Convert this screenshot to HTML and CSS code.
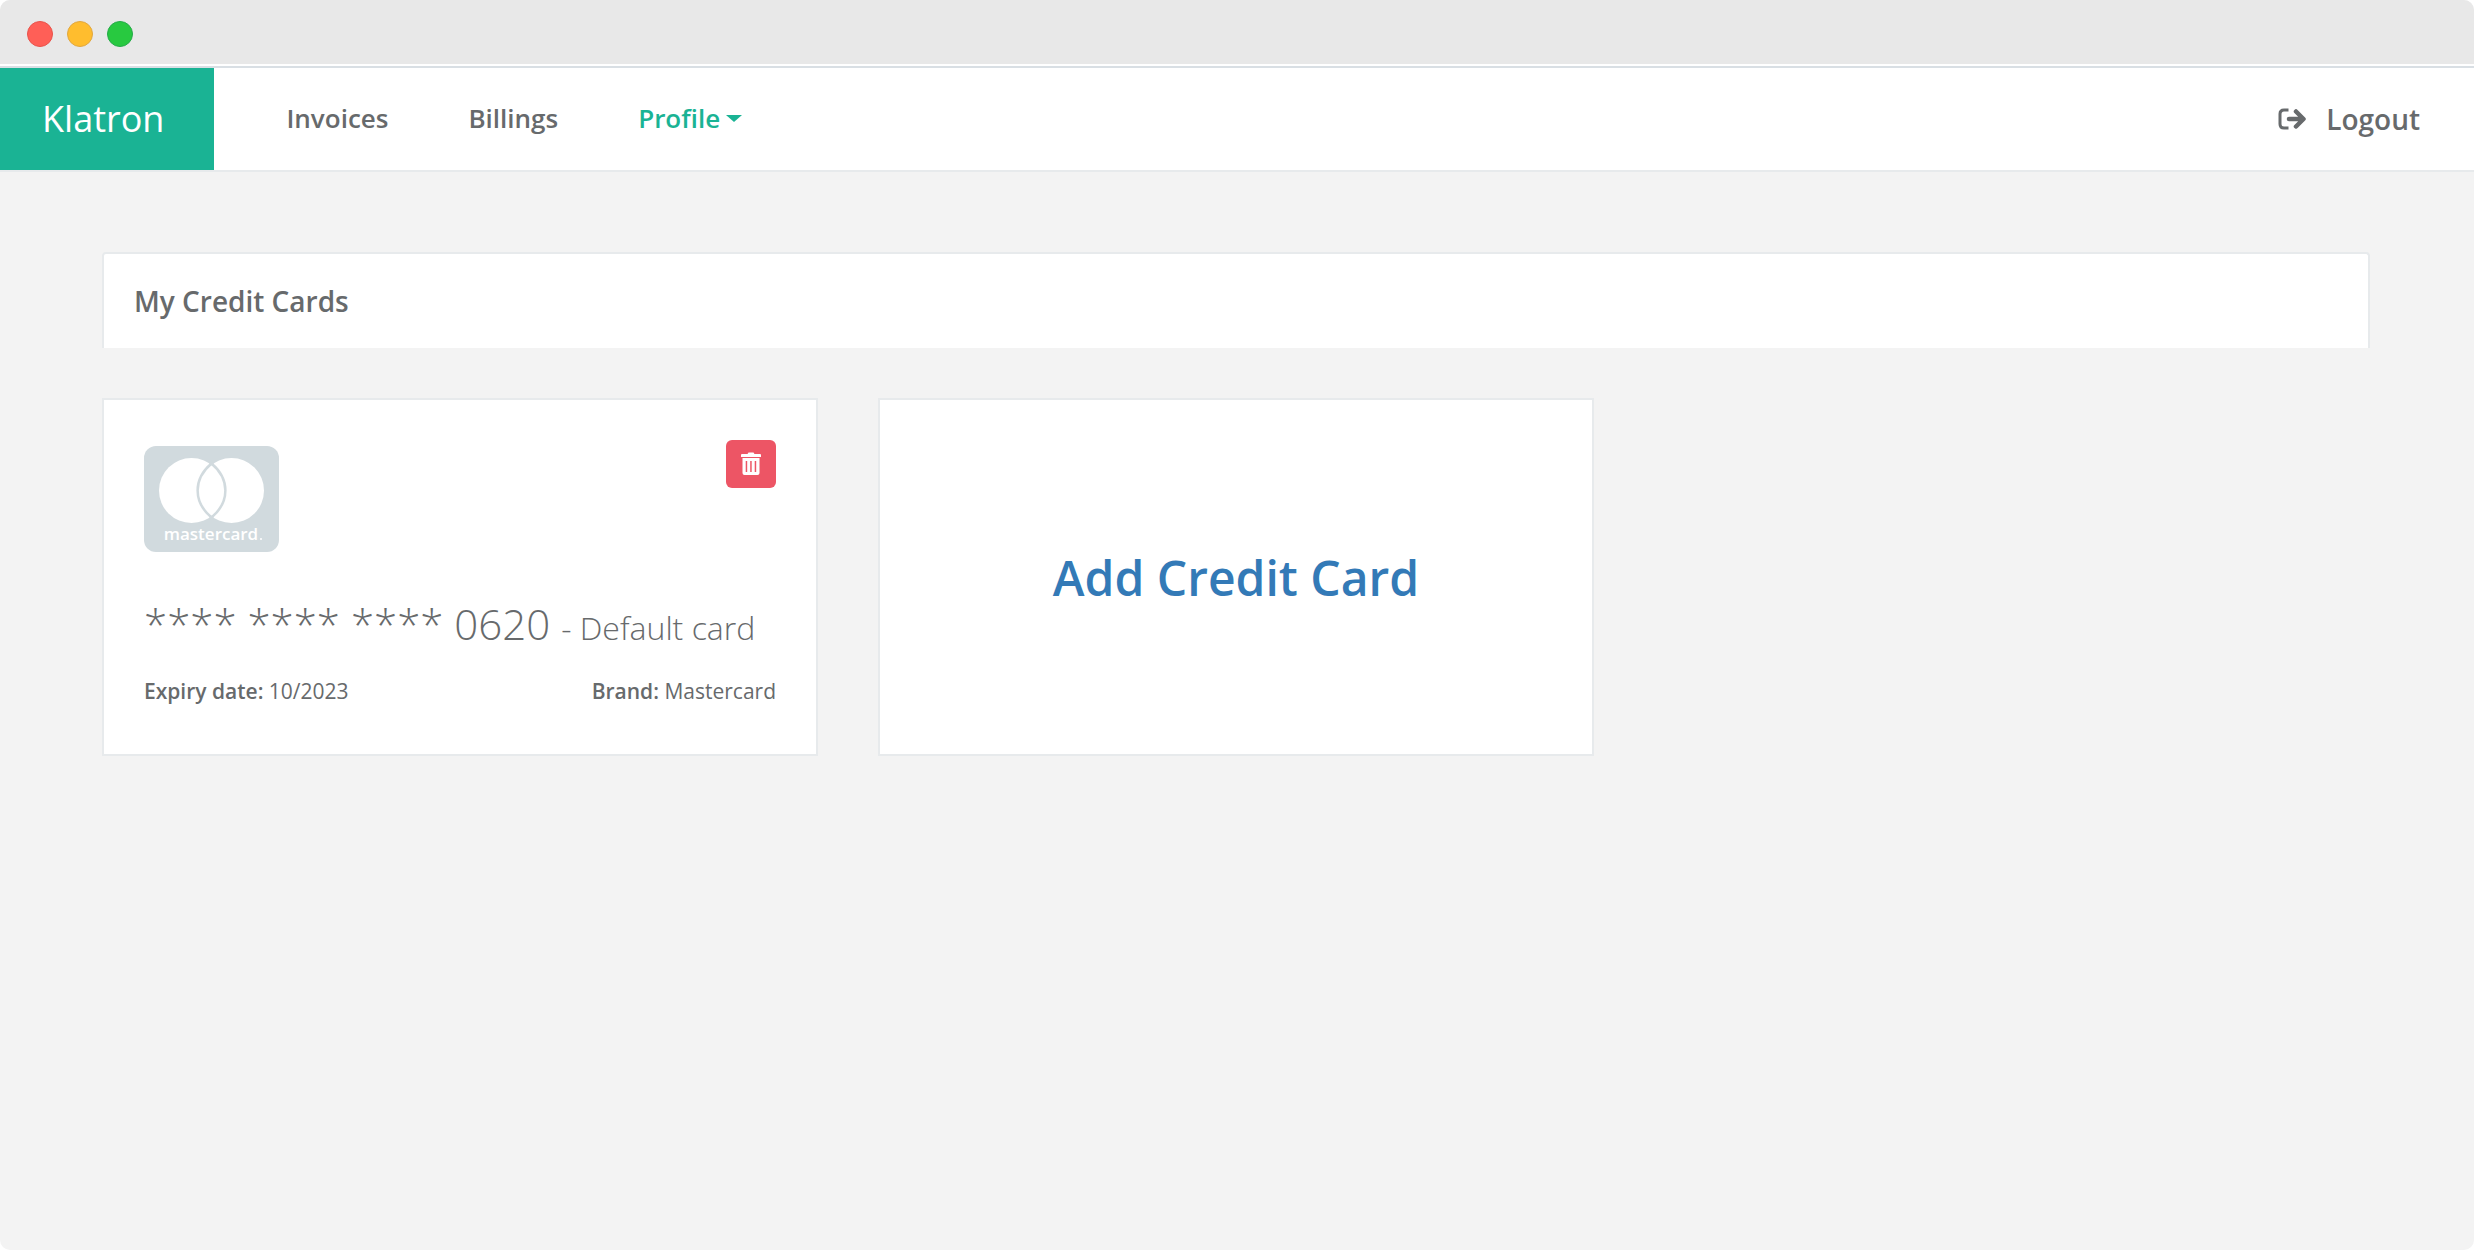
FILE: index.html
```html
<!DOCTYPE html>
<html lang="en">
<head>
<meta charset="utf-8">
<title>Klatron - My Credit Cards</title>
<link rel="stylesheet" href="styles.css">
</head>
<body>
<div class="window">
  <div class="titlebar">
    <span class="dot dot-close"></span>
    <span class="dot dot-minimize"></span>
    <span class="dot dot-zoom"></span>
  </div>
  <header class="topbar">
    <a class="brand" href="#">Klatron</a>
    <nav class="menu">
      <a class="menu-link" href="#">Invoices</a>
      <a class="menu-link" href="#">Billings</a>
      <a class="menu-link active" href="#">Profile<span class="caret"></span></a>
    </nav>
    <a class="logout" href="#">
      <svg class="logout-icon" viewBox="0 0 28 22" aria-hidden="true">
        <path d="M10.500 2H6Q2 2 2 6V16Q2 20 6 20H10.500" fill="none" stroke="currentColor" stroke-width="3"/>
        <path d="M11 11H25M18 3.500L25.500 11L18 18.500" fill="none" stroke="currentColor" stroke-width="4.500" stroke-linecap="round" stroke-linejoin="round"/>
      </svg>
      Logout
    </a>
  </header>
  <main class="content">
    <h1 class="panel-title">My Credit Cards</h1>
    <section class="cards">
      <article class="card">
        <div class="card-top">
          <svg class="card-logo" viewBox="0 0 135 106" role="img" aria-label="Mastercard">
            <rect width="135" height="106" rx="12" fill="#d1dade"/>
            <circle cx="47.500" cy="44.500" r="32.500" fill="#fff"/>
            <circle cx="87.500" cy="44.500" r="32.500" fill="#fff"/>
            <path d="M67.500 17.500C49 33 49 56 67.500 71.500C86 56 86 33 67.500 17.500Z" fill="none" stroke="#d1dade" stroke-width="2.500"/>
            <path d="M65 17L67.500 19.500L70 17L67.500 14ZM65 72L67.500 69.500L70 72L67.500 75Z" fill="#d1dade"/>
            <text class="logo-word" x="67" y="94" text-anchor="middle">mastercard</text>
            <circle cx="117" cy="93" r="1" fill="#fff"/>
          </svg>
          <button class="delete" type="button" aria-label="Delete card">
            <svg class="trash-icon" viewBox="0 0 20 24" aria-hidden="true">
              <path d="M6.500 2L7.500 .5H12.500L13.500 2H19Q20 2 20 3V5H0V3Q0 2 1 2Z" fill="#fff"/>
              <path fill-rule="evenodd" d="M1.500 6H18.500V21Q18.500 23 16.500 23H3.500Q1.500 23 1.500 21ZM4.700 9V20H6.200V9ZM9.200 9V20H10.700V9ZM13.700 9V20H15.200V9Z" fill="#fff"/>
            </svg>
          </button>
        </div>
        <h2 class="number">**** **** **** 0620 <small class="default">- Default card</small></h2>
        <div class="details">
          <span><strong>Expiry date:</strong> 10/2023</span>
          <span><strong>Brand:</strong> Mastercard</span>
        </div>
      </article>
      <a class="card card-add" href="#">Add Credit Card</a>
    </section>
  </main>
</div>
</body>
</html>
```
FILE: styles.css
```css
* { box-sizing: border-box; }
body {
  margin: 0;
  background: #fff;
  color: #676a6c;
  font-family: "Open Sans", "Liberation Sans", sans-serif;
  font-size: 21px;
}
a { color: inherit; text-decoration: none; }
.window {
  min-height: 100vh;
  border-radius: 10px;
  background: #f3f3f3;
  overflow: hidden;
}
.titlebar {
  display: flex;
  align-items: center;
  gap: 14px;
  height: 66px;
  padding: 4px 27px 0;
  background: #e8e8e8;
  border-bottom: 2px solid #fff;
}
.dot { width: 26px; height: 26px; border-radius: 50%; border: 1px solid; }
.dot-close { background: #ff5f57; border-color: #e9524a; }
.dot-minimize { background: #ffbd2e; border-color: #e1a73e; }
.dot-zoom { background: #28c940; border-color: #24ab48; }
.topbar {
  display: flex;
  height: 106px;
  background: #fff;
  border-top: 2px solid #d9dfe4;
  border-bottom: 2px solid #e7eaec;
}
.brand {
  display: flex;
  align-items: center;
  padding: 0 50px 2px 42px;
  background: #1ab394;
  color: #fff;
  font-size: 36px;
}
.menu { display: flex; padding-left: 32px; }
.menu-link {
  display: flex;
  align-items: center;
  padding: 0 40px 2px;
  font-size: 26px;
  font-weight: 600;
}
.active { color: #1ab394; }
.caret {
  margin-left: 6px;
  border: 8px solid transparent;
  border-top: 7px solid #1ab394;
  border-bottom: 0;
}
.logout {
  display: flex;
  align-items: center;
  gap: 20px;
  margin-left: auto;
  padding-right: 54px;
  font-size: 28px;
  font-weight: 600;
}
.logout-icon { width: 28px; height: 22px; }
.content { padding: 80px 104px 80px 102px; }
.panel-title {
  margin: 0 0 50px;
  padding: 28px 30px;
  background: #fff;
  border: 2px solid #e7eaec;
  border-bottom: 0;
  border-radius: 4px 4px 0 0;
  font-size: 28px;
  font-weight: 600;
  line-height: 38px;
}
.cards { display: grid; grid-template-columns: repeat(3, 1fr); gap: 60px; }
.card {
  padding: 40px 40px 48px;
  background: #fff;
  border: 2px solid #e7eaec;
}
.card-top { display: flex; justify-content: space-between; align-items: flex-start; }
.card-logo { width: 135px; height: 106px; margin-top: 6px; }
.logo-word { font-family: "Open Sans", sans-serif; font-size: 17px; font-weight: 600; fill: #fff; }
.delete {
  display: flex;
  align-items: center;
  justify-content: center;
  width: 50px;
  height: 48px;
  padding: 0;
  border: 0;
  border-radius: 6px;
  background: #ed5565;
}
.trash-icon { width: 20px; height: 24px; }
.number { margin: 46px 0 22px; font-size: 42px; font-weight: 300; line-height: 52px; }
.default { font-size: 32px; }
.details { display: flex; justify-content: space-between; line-height: 30px; }
.details strong { font-weight: 600; }
.card-add {
  display: flex;
  align-items: center;
  justify-content: center;
  padding: 40px;
  color: #337ab7;
  font-size: 48px;
  font-weight: 600;
}
```
